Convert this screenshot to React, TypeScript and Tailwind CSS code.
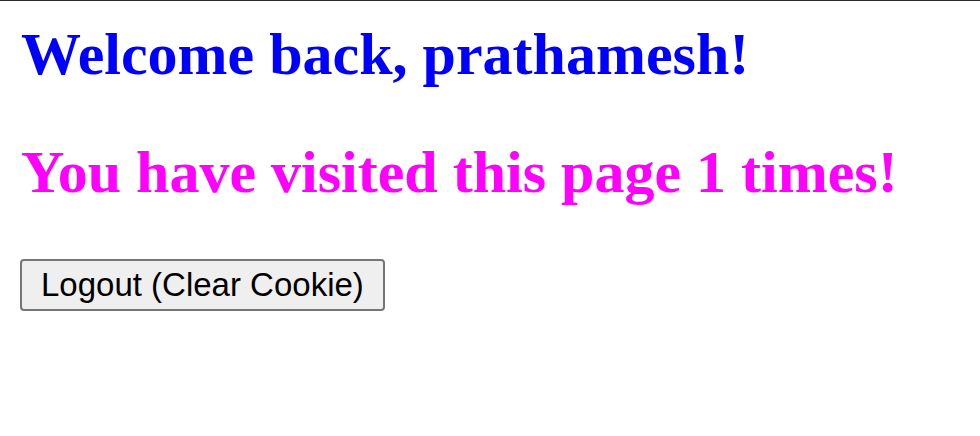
import React, { useState } from 'react';

const App: React.FC = () => {
  const [visits] = useState(1);

  return (
    <div className="min-h-screen bg-white border-t border-[#2b2b2b] pl-[21px] pt-[19px]">
      <h1 className="m-0 text-[60px] leading-[68px] font-bold text-[#0000ff] font-['Liberation_Serif','Times_New_Roman',serif]">
        Welcome back, prathamesh!
      </h1>
      <h2 className="mt-[50px] text-[60px] leading-[68px] font-bold text-[#ff00ff] font-['Liberation_Serif','Times_New_Roman',serif]">
        You have visited this page {visits} times!
      </h2>
      <button className="mt-[53px] -ml-px h-[52px] px-[19px] rounded-[4px] border-2 border-[#767676] bg-[#efefef] text-[33px] leading-[38px] text-black font-['Liberation_Sans',Arial,sans-serif]">
        Logout (Clear Cookie)
      </button>
    </div>
  );
};

export default App;
